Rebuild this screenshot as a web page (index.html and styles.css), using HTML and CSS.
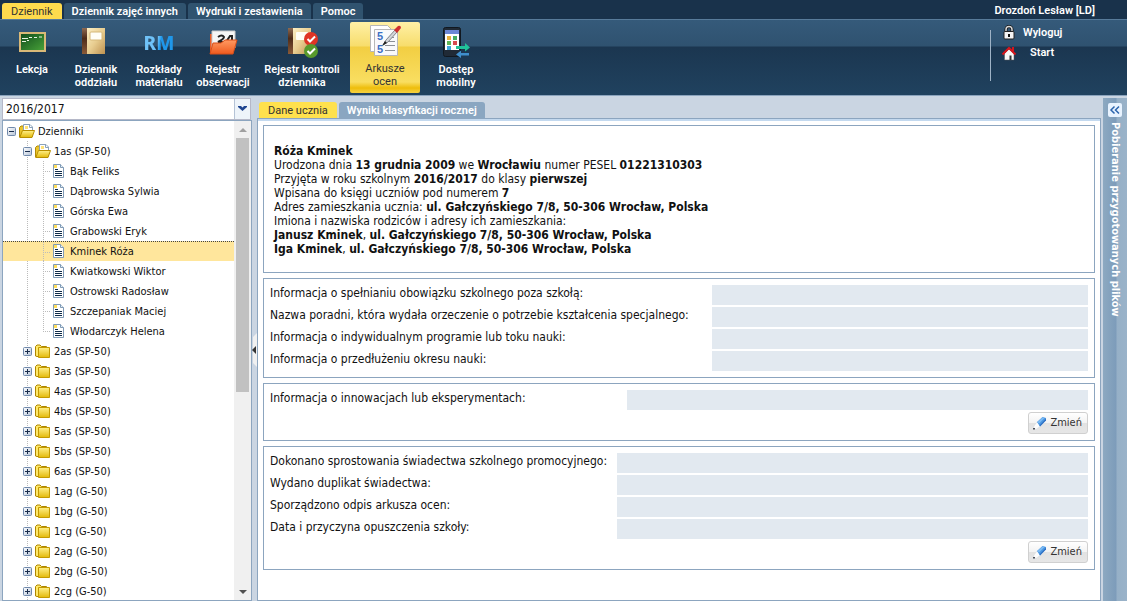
FILE: index.html
```html
<!DOCTYPE html>
<html lang="pl">
<head>
<meta charset="utf-8">
<title>Dziennik - Arkusze ocen</title>
<link rel="stylesheet" href="styles.css">
</head>
<body>
<svg class="defs" aria-hidden="true">
  <defs>
    <linearGradient id="gold" x1="0" y1="0" x2="0" y2="1"><stop offset="0" stop-color="#fff08a"/><stop offset="1" stop-color="#e3b90a"/></linearGradient>
    <linearGradient id="book" x1="0" y1="0" x2="1" y2="1"><stop offset="0" stop-color="#fbeec4"/><stop offset=".5" stop-color="#e8cd90"/><stop offset="1" stop-color="#bd9150"/></linearGradient>
    <linearGradient id="spine" x1="0" y1="0" x2="0" y2="1"><stop offset="0" stop-color="#8d6a52"/><stop offset=".4" stop-color="#4d2b18"/><stop offset="1" stop-color="#8a5a38"/></linearGradient>
    <linearGradient id="board" x1="0" y1="0" x2="1" y2="1"><stop offset="0" stop-color="#0f4a1c"/><stop offset="1" stop-color="#4aa53a"/></linearGradient>
    <linearGradient id="orange" x1="0" y1="0" x2="0" y2="1"><stop offset="0" stop-color="#ff9a62"/><stop offset="1" stop-color="#ef5a1e"/></linearGradient>
    <linearGradient id="knob" x1="0" y1="0" x2="1" y2="1"><stop offset="0" stop-color="#fff"/><stop offset="1" stop-color="#b4c2d6"/></linearGradient>
    <symbol id="i-minus" viewBox="0 0 9 9"><rect x=".5" y=".5" width="8" height="8" rx="1" fill="url(#knob)" stroke="#7089ab"/><path d="M2 4.500h5" stroke="#182c4c"/></symbol>
    <symbol id="i-plus" viewBox="0 0 9 9"><rect x=".5" y=".5" width="8" height="8" rx="1" fill="url(#knob)" stroke="#7089ab"/><path d="M2 4.500h5M4.500 2v5" stroke="#182c4c"/></symbol>
    <symbol id="i-open" viewBox="0 0 16 16"><path d="M.5 13V3.500L2 2h3l1.500 2H13v9z" fill="#eac42c" stroke="#b18b06"/><path d="M4.500 7V.5H11L13.500 3v4z" fill="#fff" stroke="#8ba2ba"/><path d="M6 2h3v3H6z" fill="#ffe27a"/><path d="M10.500.5V3.500h3" fill="none" stroke="#8ba2ba"/><path d="M.8 13.500 3.500 6.500h12L13 13.500z" fill="url(#gold)" stroke="#b88f00"/></symbol>
    <symbol id="i-folder" viewBox="0 0 16 16"><path d="M.5 12V2.500L2 1h3L6.500 2.500h5v10H2z" fill="#ffe868" stroke="#ad8500"/><path d="M3.500 13.500v-10h11v10z" fill="url(#gold)" stroke="#c49a00"/></symbol>
    <symbol id="i-doc" viewBox="0 0 16 16"><path d="M2.500.5h7l3 3v10h-10z" fill="#fff" stroke="#7f9ab5"/><path d="M9.500.5v3h3" fill="#e8f0f7" stroke="#7f9ab5"/><path d="M3 1h3v3H3z" fill="#ffdf5c"/><path d="M4 5.500h3M4 7.500h7M4 9.500h7M4 11.500h7" stroke="#0f2b48"/></symbol>
    <symbol id="i-pencil" viewBox="0 0 16 16"><path d="m5 7 4 4-4.500 3L1.500 14.500 2 11z" fill="#fdfdfd" stroke="#d5d9de" stroke-width=".5"/><path d="m5 7 5.500-5L14 3v2l-6 6.500z" fill="#4c97e2"/><path d="M7.500 10.500 14 3.500v2l-6 6z" fill="#2f6fc2"/><path d="m5.500 7 5-4.500 2 .5L7 8.500z" fill="#7dbcf4"/><path d="M1 13h2v1.500H1z" fill="#4a4f58"/></symbol>
  </defs>
</svg>

<header class="header">
  <div class="menu">
    <nav class="menu-tabs">
      <a class="menu-tab active" href="#">Dziennik</a>
      <a class="menu-tab" href="#">Dziennik zajęć innych</a>
      <a class="menu-tab" href="#">Wydruki i zestawienia</a>
      <a class="menu-tab" href="#">Pomoc</a>
    </nav>
    <span class="user">Drozdoń Lesław [LD]</span>
  </div>
  <div class="ribbon">
    <div class="tools">
      <button class="tool"><svg viewBox="0 0 32 32"><rect x="4" y="7" width="25" height="18" fill="url(#board)" stroke="#d9b978" stroke-width="2"/><path d="M6 12.500h6m1-1h3m2 0h3m2-.5h3M6 15.500h4m1-1h2" stroke="#e7f3e2" stroke-width="1"/></svg><span>Lekcja</span></button>
      <button class="tool"><svg viewBox="0 0 32 32"><path d="M2 2h5v26H2z" fill="url(#spine)"/><path d="M7 2h18v26H7z" fill="url(#book)"/><rect x="10" y="6" width="12" height="8" rx="1" fill="#fffef6" stroke="#d5b878"/></svg><span>Dziennik<br>oddziału</span></button>
      <button class="tool"><span class="rm">RM</span><span>Rozkłady<br>materiału</span></button>
      <button class="tool"><svg viewBox="0 0 32 32"><path d="M3 8h3v20H3z" fill="#e95d28"/><path d="M5 5h23v17H5z" fill="#f6f6f6" stroke="#c9c9c9"/><path d="M11 11q4-3 6 0 0 2-6 5h6M19 16l4-6h2v6" fill="none" stroke="#222" stroke-width="2"/><path d="M3 28 6 17h8l4-3h12l-4 14z" fill="url(#orange)" stroke="#d94e18"/></svg><span>Rejestr<br>obserwacji</span></button>
      <button class="tool"><svg viewBox="0 0 32 32"><path d="M2 2h5v26H2z" fill="url(#spine)"/><path d="M7 2h18v26H7z" fill="url(#book)"/><rect x="10" y="6" width="12" height="8" rx="1" fill="#fffef6"/><circle cx="25" cy="13" r="7" fill="#df3425"/><path d="m21.500 13 2.500 2.500 5-5" fill="none" stroke="#fff" stroke-width="2"/><circle cx="25" cy="25" r="7" fill="#58992c"/><path d="m21.500 25 2.500 2.500 5-5" fill="none" stroke="#fff" stroke-width="2"/></svg><span>Rejestr kontroli<br>dziennika</span></button>
      <button class="tool selected"><svg viewBox="0 0 32 32"><path d="M1.500.5h17l4 4v22h-21z" fill="#fff" stroke="#b7b7b7"/><path d="M5.500 4.500h23v26h-23z" fill="#f9f9fb" stroke="#b7b7b7"/><text x="8" y="15" class="grade">5</text><text x="8" y="28" class="grade">5</text><path d="M19 12.500h6M18 16.500h8M16 20.500h10M16 25.500h10" stroke="#8c9096"/><path d="m14 20 3-5 9-10 2 2-9 10z" fill="#d4d6da" stroke="#83868c"/><path d="m13 21 3-5 2 2z" fill="#222"/><path d="m25 5 4-4q3-1 3 2l-4 5z" fill="#cf2f2f"/></svg><span>Arkusze<br>ocen</span></button>
      <button class="tool"><svg viewBox="0 0 32 32"><rect x="3.500" y="1.500" width="17" height="29" rx="2" fill="#202a36" stroke="#111820"/><path d="M5 4h14v20H5z" fill="#fff"/><path d="M5 4h14v4H5z" fill="#6d88d5"/><path d="M7 10h4v4H7z" fill="#e9b13f"/><path d="M13 10h4v4h-4z" fill="#47ad63"/><path d="M7 15h4v4H7z" fill="#5fb657"/><path d="M13 15h4v4h-4z" fill="#d84a50"/><path d="M7 20h4v4H7z" fill="#3fa6dc"/><path d="M16 20h9v-3l5 4.500-5 4V23h-9z" fill="#20c39a"/><path d="M29 27h-8v-2.500L16 28.500l5 3.500v-2.500h8z" fill="#3f8fcd"/></svg><span>Dostęp<br>mobilny</span></button>
    </div>
    <div class="session">
      <a href="#"><svg viewBox="0 0 16 16"><path d="M5 7V4.500a3 3 0 0 1 6 0V7" fill="none" stroke="#111" stroke-width="3"/><path d="M5 7V4.500a3 3 0 0 1 6 0V7" fill="none" stroke="#d8d8d8" stroke-width="1.500"/><rect x="3" y="6.500" width="10" height="7.500" rx="1" fill="#f5f5f5" stroke="#222"/><path d="M7 9h2v3H7z" fill="#111"/></svg>Wyloguj</a>
      <a href="#" class="home"><svg viewBox="0 0 16 16"><path d="M3.500 8.500 8 4l5 4.500V15H3.500z" fill="#f8f8f8" stroke="#555" stroke-width=".5"/><path d="M8.500 10.500h2V15h-2z" fill="#333"/><path d="M1.500 9.500 8 3l6.500 6.500" fill="none" stroke="#d6151c" stroke-width="2"/><path d="M11 2h2v4h-2z" fill="#d6151c"/></svg>Start</a>
    </div>
  </div>
</header>

<div class="workspace">
  <aside class="sidebar">
    <select class="year" aria-label="Rok szkolny"><option>2016/2017</option></select>
    <div class="tree-panel">
      <ul class="tree">
        <li class="root"><div class="row"><svg class="box"><use href="#i-minus"/></svg><svg><use href="#i-open"/></svg>Dzienniki</div>
          <ul class="classes">
            <li><div class="row"><svg class="box"><use href="#i-minus"/></svg><svg><use href="#i-open"/></svg>1as (SP-50)</div>
              <ul class="pupils">
                <li><div class="row"><svg><use href="#i-doc"/></svg>Bąk Feliks</div></li>
                <li><div class="row"><svg><use href="#i-doc"/></svg>Dąbrowska Sylwia</div></li>
                <li><div class="row"><svg><use href="#i-doc"/></svg>Górska Ewa</div></li>
                <li><div class="row"><svg><use href="#i-doc"/></svg>Grabowski Eryk</div></li>
                <li class="current"><div class="row"><svg><use href="#i-doc"/></svg>Kminek Róża</div></li>
                <li><div class="row"><svg><use href="#i-doc"/></svg>Kwiatkowski Wiktor</div></li>
                <li><div class="row"><svg><use href="#i-doc"/></svg>Ostrowski Radosław</div></li>
                <li><div class="row"><svg><use href="#i-doc"/></svg>Szczepaniak Maciej</div></li>
                <li><div class="row"><svg><use href="#i-doc"/></svg>Włodarczyk Helena</div></li>
              </ul>
            </li>
            <li><div class="row"><svg class="box"><use href="#i-plus"/></svg><svg><use href="#i-folder"/></svg>2as (SP-50)</div></li>
            <li><div class="row"><svg class="box"><use href="#i-plus"/></svg><svg><use href="#i-folder"/></svg>3as (SP-50)</div></li>
            <li><div class="row"><svg class="box"><use href="#i-plus"/></svg><svg><use href="#i-folder"/></svg>4as (SP-50)</div></li>
            <li><div class="row"><svg class="box"><use href="#i-plus"/></svg><svg><use href="#i-folder"/></svg>4bs (SP-50)</div></li>
            <li><div class="row"><svg class="box"><use href="#i-plus"/></svg><svg><use href="#i-folder"/></svg>5as (SP-50)</div></li>
            <li><div class="row"><svg class="box"><use href="#i-plus"/></svg><svg><use href="#i-folder"/></svg>5bs (SP-50)</div></li>
            <li><div class="row"><svg class="box"><use href="#i-plus"/></svg><svg><use href="#i-folder"/></svg>6as (SP-50)</div></li>
            <li><div class="row"><svg class="box"><use href="#i-plus"/></svg><svg><use href="#i-folder"/></svg>1ag (G-50)</div></li>
            <li><div class="row"><svg class="box"><use href="#i-plus"/></svg><svg><use href="#i-folder"/></svg>1bg (G-50)</div></li>
            <li><div class="row"><svg class="box"><use href="#i-plus"/></svg><svg><use href="#i-folder"/></svg>1cg (G-50)</div></li>
            <li><div class="row"><svg class="box"><use href="#i-plus"/></svg><svg><use href="#i-folder"/></svg>2ag (G-50)</div></li>
            <li><div class="row"><svg class="box"><use href="#i-plus"/></svg><svg><use href="#i-folder"/></svg>2bg (G-50)</div></li>
            <li><div class="row"><svg class="box"><use href="#i-plus"/></svg><svg><use href="#i-folder"/></svg>2cg (G-50)</div></li>
          </ul>
        </li>
      </ul>
      <div class="scrollbar"><span class="arrow up"></span><div class="track"><div class="thumb"></div></div><span class="arrow down"></span></div>
    </div>
  </aside>
  <button class="splitter" aria-label="Zwiń panel"><svg viewBox="0 0 5 34"><path d="M5 0v34L1 30V4z" fill="#f0f0f0"/><path d="M4 13v8L0 17z" fill="#333"/></svg></button>
  <main class="main">
    <nav class="tabs">
      <a class="tab active" href="#">Dane ucznia</a>
      <a class="tab" href="#">Wyniki klasyfikacji rocznej</a>
    </nav>
    <div class="content">
      <section class="card bio">
        <p><b>Róża Kminek</b></p>
        <p>Urodzona dnia <b>13 grudnia 2009</b> we <b>Wrocławiu</b> numer PESEL <b>01221310303</b></p>
        <p>Przyjęta w roku szkolnym <b>2016/2017</b> do klasy <b>pierwszej</b></p>
        <p>Wpisana do księgi uczniów pod numerem <b>7</b></p>
        <p>Adres zamieszkania ucznia: <b>ul. Gałczyńskiego 7/8, 50-306 Wrocław, Polska</b></p>
        <p>Imiona i nazwiska rodziców i adresy ich zamieszkania:</p>
        <p><b>Janusz Kminek</b>, <b>ul. Gałczyńskiego 7/8, 50-306 Wrocław, Polska</b></p>
        <p><b>Iga Kminek</b>, <b>ul. Gałczyńskiego 7/8, 50-306 Wrocław, Polska</b></p>
      </section>
      <section class="card">
        <div class="fields duties">
          <label for="f1">Informacja o spełnianiu obowiązku szkolnego poza szkołą:</label><input id="f1" readonly>
          <label for="f2">Nazwa poradni, która wydała orzeczenie o potrzebie kształcenia specjalnego:</label><input id="f2" readonly>
          <label for="f3">Informacja o indywidualnym programie lub toku nauki:</label><input id="f3" readonly>
          <label for="f4">Informacja o przedłużeniu okresu nauki:</label><input id="f4" readonly>
        </div>
      </section>
      <section class="card">
        <div class="fields innovations">
          <label for="f5">Informacja o innowacjach lub eksperymentach:</label><input id="f5" readonly>
        </div>
        <button class="edit"><svg><use href="#i-pencil"/></svg>Zmień</button>
      </section>
      <section class="card">
        <div class="fields documents">
          <label for="f6">Dokonano sprostowania świadectwa szkolnego promocyjnego:</label><input id="f6" readonly>
          <label for="f7">Wydano duplikat świadectwa:</label><input id="f7" readonly>
          <label for="f8">Sporządzono odpis arkusza ocen:</label><input id="f8" readonly>
          <label for="f9">Data i przyczyna opuszczenia szkoły:</label><input id="f9" readonly>
        </div>
        <button class="edit"><svg><use href="#i-pencil"/></svg>Zmień</button>
      </section>
    </div>
  </main>
  <aside class="downloads">
    <button class="expand" aria-label="Rozwiń"><svg viewBox="0 0 14 14"><path d="M6.500 3.500 3 7l3.500 3.500M11 3.500 7.500 7l3.500 3.500" fill="none" stroke="#2b64ad" stroke-width="1.500"/></svg></button>
    <span class="vertical">Pobieranie przygotowanych plików</span>
  </aside>
</div>
</body>
</html>
```
FILE: styles.css
```css
* { box-sizing: border-box; }
body {
  margin: 0;
  height: 100vh;
  display: flex;
  flex-direction: column;
  overflow: hidden;
  background: #cad5e2;
  font: 11px/14px Tahoma, "DejaVu Sans Condensed", "Noto Sans", sans-serif;
  color: #111;
}
button, input, select { font: inherit; color: inherit; margin: 0; }
button { border: 0; padding: 0; background: none; }
a { color: inherit; text-decoration: none; }
ul { list-style: none; margin: 0; padding: 0; }
p { margin: 0; }
.defs { position: absolute; width: 0; height: 0; }

.header { flex: none; color: #fff; font-family: Roboto, sans-serif; font-weight: 600; }
.menu {
  height: 20px;
  display: flex;
  justify-content: space-between;
  align-items: flex-end;
  padding: 0 32px 0 2px;
  background: #19324b;
  border-bottom: 1px solid #587b9a;
}
.menu-tabs { display: flex; gap: 2px; }
.menu-tab {
  height: 16px;
  padding: 0 8px;
  line-height: 17px;
  border-radius: 3px 3px 0 0;
  background: #30536f;
}
.menu-tab.active { padding: 0 9px; background: #ffdb4d; color: #333; font-weight: 400; }
.user { line-height: 16px; }
.ribbon {
  height: 76px;
  display: flex;
  justify-content: space-between;
  background: linear-gradient(#355a7a, #2f5270 26px, #1b3650 27px, #20425f);
  border-bottom: 1px solid #8aa3bd;
}
.tools {
  display: grid;
  grid-template-columns: 64px 64px 62px 66px 92px 72px 72px;
  padding-top: 2px;
}
.tool {
  height: 71px;
  display: flex;
  flex-direction: column;
  align-items: center;
  padding-top: 4px;
  gap: 5px;
  line-height: 13px;
  text-align: center;
  white-space: nowrap;
}
.tool svg { width: 32px; height: 32px; flex: none; }
.tool.selected {
  margin-left: 2px;
  padding-top: 3px;
  border-radius: 2px;
  color: #333;
  font-weight: 400;
  background: linear-gradient(#fff0a6, #f7dd6c 24px, #f2ce42 25px, #f9de61 60px, #eebd0b 66px, #f6cf3a 70px);
}
.grade { font: 700 11px "Liberation Sans", sans-serif; fill: #3b6fc4; }
.rm {
  height: 32px;
  font: 800 19px/34px "Noto Sans", sans-serif;
  color: transparent;
  background: linear-gradient(100deg, #6fc2f8 45%, #1f97ea 55%);
  background-clip: text;
}
.session {
  width: 137px;
  height: 51px;
  margin-top: 10px;
  padding-left: 10px;
  border-left: 1px solid #9fb3c6;
}
.session a { display: flex; align-items: center; gap: 6px; height: 20px; margin-top: -7px; }
.session a + a { margin-top: 0; gap: 13px; }
.session svg { width: 16px; height: 16px; }

.workspace { flex: 1; min-height: 0; display: flex; padding-top: 2px; }
.sidebar { flex: none; width: 252px; padding-left: 2px; display: flex; flex-direction: column; }
.year {
  flex: none;
  appearance: none;
  width: 249px;
  height: 22px;
  padding: 0 3px;
  border: 1px solid #b5b8c8;
  border-radius: 0;
  font-size: 12px;
  background:
    url("data:image/svg+xml,%3Csvg xmlns='http://www.w3.org/2000/svg' width='16' height='20'%3E%3Crect width='16' height='20' fill='%23eef4fa'/%3E%3Cpath d='M.5 0v20' stroke='%23b5c3d6'/%3E%3Cpath d='M4 7h3l1.500 1.500L10 7h3v1l-4.500 4L4 8z' fill='%231f4590'/%3E%3C/svg%3E") right / 16px 20px no-repeat,
    #fff;
}
.tree-panel {
  flex: 1;
  min-height: 0;
  display: flex;
  border: 1px solid #8ca5bf;
  background: #fff;
}
.tree { flex: 1; min-width: 0; overflow: hidden; }
.row { display: flex; align-items: center; height: 20px; gap: 3px; padding: 1px 0 0 4px; white-space: nowrap; }
.row svg { width: 16px; height: 16px; flex: none; }
.row svg.box { width: 9px; height: 9px; }
.classes .row { padding-left: 20px; }
.pupils .row { padding-left: 48px; }
.classes > li { background: repeating-linear-gradient(#bbb 0 1px, transparent 1px 2px) 24px 0 / 1px 100% no-repeat; }
.pupils > li {
  background:
    repeating-linear-gradient(#bbb 0 1px, transparent 1px 2px) 40px 0 / 1px 100% no-repeat,
    repeating-linear-gradient(90deg, #bbb 0 1px, transparent 1px 2px) 40px 10px / 7px 1px no-repeat;
}
.pupils > li:last-child { background-size: 1px 10px, 7px 1px; }
.pupils > li.current { background-color: #ffe69c; border-top: 1px dotted #444; }
.current .row { height: 19px; padding-top: 0; }
.scrollbar { width: 17px; flex: none; display: flex; flex-direction: column; align-items: center; background: #f0f0f0; }
.arrow { height: 17px; display: flex; align-items: center; }
.arrow::before { content: ""; border: 4px solid transparent; border-top-width: 0; border-bottom-color: #a0a0a0; }
.arrow.down::before { border-width: 4px 4px 0; border-color: #505050 transparent transparent; }
.track { flex: 1; width: 13px; }
.thumb { height: 57%; background: #c1c1c1; }

.splitter { flex: none; width: 5px; display: flex; align-items: center; }
.splitter svg { width: 5px; height: 34px; }

.main { flex: 1; min-width: 0; display: flex; flex-direction: column; }
.tabs { display: flex; gap: 2px; padding: 4px 2px 0; font-family: Roboto, sans-serif; }
.tab {
  height: 16px;
  padding: 0 8px;
  line-height: 17px;
  border-radius: 3px 3px 0 0;
  background: #8aa6c1;
  color: #fff;
  font-weight: 600;
}
.tab.active { padding: 0 9px; background: #ffe14d; color: #333; font-weight: 400; }
.content {
  flex: 1;
  min-height: 0;
  display: flex;
  flex-direction: column;
  gap: 5px;
  padding: 6px 5px 4px;
  border: 1px solid #8ca5bf;
  box-shadow: inset 0 2px #c3d9ef;
  background: #fff;
}
.card { border: 1px solid #8ca5bf; padding: 6px; font-size: 12px; display: flex; flex-direction: column; }
.bio { padding: 18px 10px 16px; }
.fields { display: grid; row-gap: 2px; }
.fields label { line-height: 16px; white-space: nowrap; }
.fields input { width: 100%; min-width: 0; height: 20px; padding: 0 3px; border: 0; background: #e2e9f0; }
.duties { grid-template-columns: 442px 1fr; }
.innovations { grid-template-columns: 357px 1fr; }
.documents { grid-template-columns: 347px 1fr; }
.edit {
  align-self: flex-end;
  display: flex;
  align-items: center;
  gap: 2px;
  height: 22px;
  margin-top: 2px;
  padding: 0 5px 0 3px;
  border: 1px solid #d0d0d0;
  border-radius: 3px;
  background: linear-gradient(#fff, #f3f3f3 50%, #e2e2e2 50%, #e6e6e6);
  font-size: 11px;
  color: #333;
}
.edit svg { width: 16px; height: 16px; }

.downloads {
  flex: none;
  width: 24px;
  margin-left: 2px;
  display: flex;
  flex-direction: column;
  align-items: center;
  gap: 5px;
  padding-top: 5px;
  background: linear-gradient(90deg, #8da9c1, #7d9cba 13px, #96b0c7 14px, #9ab3c9);
}
.expand { width: 14px; height: 14px; border-radius: 2px; background: #e8f3ff; }
.expand svg { display: block; width: 14px; height: 14px; }
.vertical { writing-mode: vertical-rl; color: #fff; font-weight: 700; white-space: nowrap; }
```
